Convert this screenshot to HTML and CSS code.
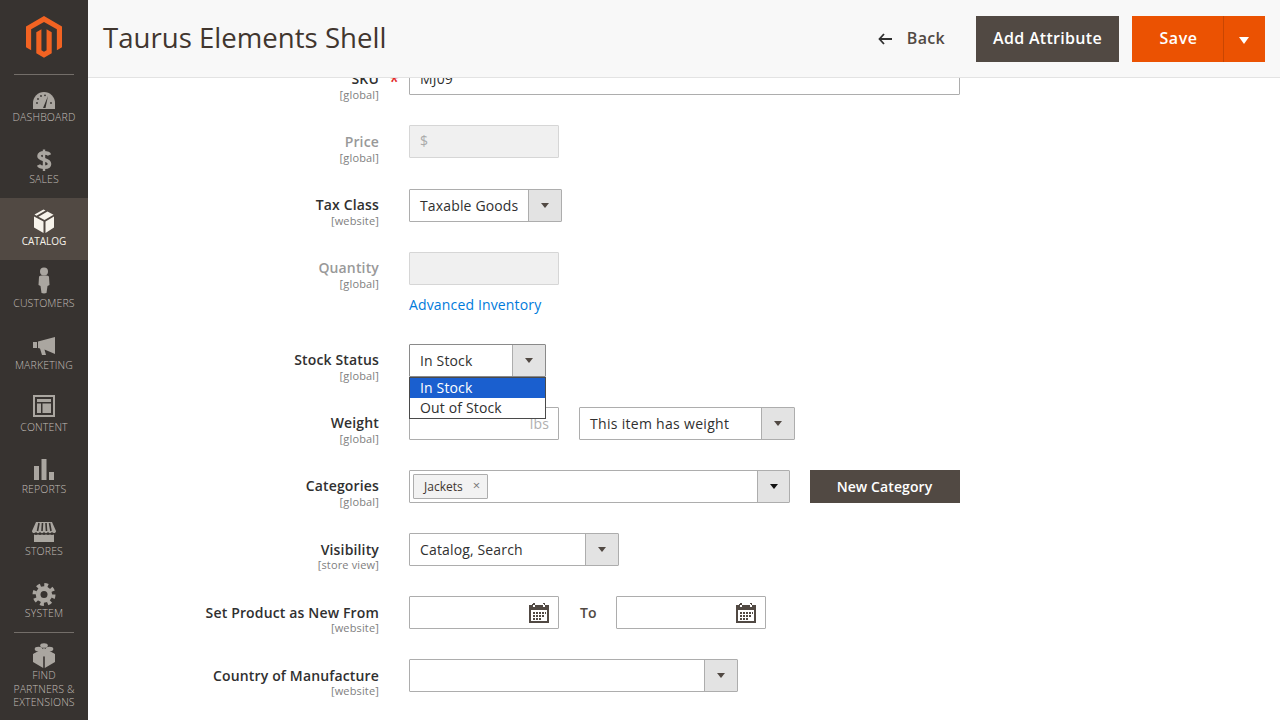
FILE: index.html
```html
<!DOCTYPE html>
<html lang="en">
<head>
<meta charset="utf-8">
<title>Taurus Elements Shell</title>
<link rel="stylesheet" href="styles.css">
</head>
<body>
<div class="app">
  <nav class="sidebar">
    <div class="logo">
      <svg width="36" height="42" viewBox="0 0 36 42"><path class="logo-mark" d="M18 0 36 10.400V31.200L30.860 34.170V13.370L18 5.940 5.140 13.370V34.170L0 31.200V10.400Z"/><path class="logo-mark" d="M10.290 16.370 15.430 13.370V34.170L18 35.650 20.570 34.170V13.370L25.710 16.370V37.160L18 41.650 10.290 37.160Z"/></svg>
    </div>
    <a class="nav-item nav-item-first">
      <svg class="nav-icon" viewBox="0 0 32 30"><path d="M5 29V23A11 11 0 0 1 27 23V29Z"/><path class="cut" d="M15 28 20 16 17.500 28Z"/><g class="ticks"><circle cx="9" cy="23" r=".9"/><circle cx="10" cy="19" r=".9"/><circle cx="13" cy="16" r=".9"/><circle cx="17" cy="15.300" r=".9"/><circle cx="23" cy="23" r=".9"/></g></svg>
      <span class="nav-label">Dashboard</span>
    </a>
    <a class="nav-item">
      <svg class="nav-icon" viewBox="0 0 32 30"><path class="dollar-line" d="M21.500 13C20.500 10.500 11 9.500 11 14 11 18.500 21.500 16.500 21.500 22 21.500 26.500 12 25.800 10.500 23"/><path class="dollar-bar" d="M16 7.500V29"/></svg>
      <span class="nav-label">Sales</span>
    </a>
    <a class="nav-item nav-item-active">
      <svg class="nav-icon" viewBox="0 0 32 30"><path d="M15.500 17.500 6 12.500V23.500L15.500 29ZM17.500 17.500V29L26 23.500V12.500Z"/><path d="M6.500 10.500 15.500 5.500 17.500 6.500 8.500 11.700ZM10.500 12.800 19.500 7.600 25.500 10.800 16.500 16Z"/></svg>
      <span class="nav-label">Catalog</span>
    </a>
    <a class="nav-item">
      <svg class="nav-icon" viewBox="0 0 32 30"><circle cx="16" cy="5.500" r="4"/><path d="M11 11C11 9.800 12.500 9.500 16 9.500S21 9.800 21 11L21.500 19 19.500 20 18.500 27 16 27.500 13.500 27 12.500 20 10.500 19Z"/></svg>
      <span class="nav-label">Customers</span>
    </a>
    <a class="nav-item">
      <svg class="nav-icon" viewBox="0 0 32 30"><path d="M5 14H9V20H5ZM10 13.500 27 9V26L16.500 21.500 18 27H14L12 20.500 10 20Z"/></svg>
      <span class="nav-label">Marketing</span>
    </a>
    <a class="nav-item">
      <svg class="nav-icon" viewBox="0 0 32 30"><path fill-rule="evenodd" d="M5 5H27V27H5ZM7 7V25H25V7ZM9 9H23V12H9ZM9 13.500H13V23H9ZM14.500 13.500H23V23H14.500Z"/></svg>
      <span class="nav-label">Content</span>
    </a>
    <a class="nav-item">
      <svg class="nav-icon" viewBox="0 0 32 30"><path d="M6 14H11V28H6ZM13.500 7H18.500V28H13.500ZM21 20H26V28H21Z"/></svg>
      <span class="nav-label">Reports</span>
    </a>
    <a class="nav-item">
      <svg class="nav-icon" viewBox="0 0 32 30"><path d="M8 8H24L28 17C28 19.500 25 19.500 24 18 23 19.500 21 19.500 20 18 19 19.500 17 19.500 16 18 15 19.500 13 19.500 12 18 11 19.500 9 19.500 8 18 7 19.500 4 19.500 4 17ZM6 20.500C7 21 9 21 10 20.500 11 21 13 21 14 20.500 15 21 17 21 18 20.500 19 21 21 21 22 20.500 23 21 25 21 26 20.500V28H6Z"/><path class="cut-line" d="M11 9 9.500 17M14.500 9 14 17M18 9 18.500 17M21.500 9 23 17"/></svg>
      <span class="nav-label">Stores</span>
    </a>
    <a class="nav-item">
      <svg class="nav-icon" viewBox="0 0 32 30"><circle class="gear-teeth" cx="16" cy="18.500" r="9.500"/><circle cx="16" cy="18.500" r="8.200"/><circle class="cut" cx="16" cy="18.500" r="3.500"/></svg>
      <span class="nav-label">System</span>
    </a>
    <div class="nav-sep"></div>
    <a class="nav-item nav-item-last">
      <svg class="nav-icon" viewBox="0 0 32 30"><path d="M16 10 27 16V24L16.800 30V19.500ZM16 10 5 16V24L15.200 30V19.500Z"/><path d="M16 11 26 16 16 18.500 6 16Z"/><ellipse cx="16" cy="7.500" rx="3.800" ry="2.300"/><ellipse cx="10.500" cy="11" rx="3.800" ry="2.300"/><ellipse cx="21.500" cy="11" rx="3.800" ry="2.300"/><ellipse cx="16" cy="14" rx="3.800" ry="2.300"/></svg>
      <span class="nav-label">Find Partners &amp; Extensions</span>
    </a>
  </nav>
  <div class="main">
    <header class="page-header">
      <h1 class="page-title">Taurus Elements Shell</h1>
      <div class="actions">
        <a class="back"><svg class="back-arrow" viewBox="0 0 14 12" width="14" height="12"><path d="M6 1 1.500 6 6 11M2 6H14"/></svg><span>Back</span></a>
        <button class="btn btn-dark btn-add">Add Attribute</button>
        <div class="split">
          <button class="btn btn-save">Save</button>
          <button class="btn btn-toggle"><span class="caret caret-white"></span></button>
        </div>
      </div>
    </header>
    <form class="form">
      <div class="row">
        <div class="label label-top"><span class="label-text">SKU</span><span class="scope">[global]</span><span class="required">*</span></div>
        <div class="input w-551">MJ09</div>
      </div>
      <div class="row row-tight">
        <div class="label label-top label-disabled"><span class="label-text">Price</span><span class="scope">[global]</span></div>
        <div class="input input-disabled w-150">$</div>
      </div>
      <div class="row">
        <div class="label"><span class="label-text">Tax Class</span><span class="scope">[website]</span></div>
        <div class="select w-153"><span class="select-value">Taxable Goods</span><span class="select-btn"><span class="caret"></span></span></div>
      </div>
      <div class="row row-stack">
        <div class="label label-disabled"><span class="label-text">Quantity</span><span class="scope">[global]</span></div>
        <div class="stack">
          <div class="input input-disabled w-150"></div>
          <a class="link">Advanced Inventory</a>
        </div>
      </div>
      <div class="row">
        <div class="label"><span class="label-text">Stock Status</span><span class="scope">[global]</span></div>
        <div class="select w-137 select-open"><span class="select-value">In Stock</span><span class="select-btn"><span class="caret"></span></span>
          <ul class="popup">
            <li class="popup-item popup-item-on">In Stock</li>
            <li class="popup-item">Out of Stock</li>
          </ul>
        </div>
      </div>
      <div class="row">
        <div class="label"><span class="label-text">Weight</span><span class="scope">[global]</span></div>
        <div class="input w-150 input-unit"><span class="unit">lbs</span></div>
        <div class="select w-216"><span class="select-value select-value-wide">This item has weight</span><span class="select-btn"><span class="caret"></span></span></div>
      </div>
      <div class="row">
        <div class="label"><span class="label-text">Categories</span><span class="scope">[global]</span></div>
        <div class="select w-381"><span class="select-value select-value-tags"><span class="tag">Jackets<span class="tag-x">×</span></span></span><span class="select-btn select-btn-narrow"><span class="caret caret-black"></span></span></div>
        <button class="btn-new">New Category</button>
      </div>
      <div class="row">
        <div class="label label-mid"><span class="label-text">Visibility</span><span class="scope">[store view]</span></div>
        <div class="select w-210"><span class="select-value">Catalog, Search</span><span class="select-btn"><span class="caret"></span></span></div>
      </div>
      <div class="row">
        <div class="label label-mid"><span class="label-text">Set Product as New From</span><span class="scope">[website]</span></div>
        <div class="input w-150 input-date"><svg class="cal" viewBox="0 0 20 20" width="20" height="20"><path fill-rule="evenodd" d="M0 2H3V1H4V2H14V1H15V2H20V20H0ZM2 7V18H18V7ZM4 0H6V4H4ZM14 0H16V4H14ZM4 9H6V11H4ZM7 9H9V11H7ZM10 9H12V11H10ZM13 9H15V11H13ZM16 9H17V11H16ZM4 12H6V14H4ZM7 12H9V14H7ZM10 12H12V14H10ZM13 12H15V14H13ZM4 15H6V17H4ZM7 15H9V17H7ZM10 15H12V17H10Z"/></svg></div>
        <span class="to">To</span>
        <div class="input w-150 input-date"><svg class="cal" viewBox="0 0 20 20" width="20" height="20"><path fill-rule="evenodd" d="M0 2H3V1H4V2H14V1H15V2H20V20H0ZM2 7V18H18V7ZM4 0H6V4H4ZM14 0H16V4H14ZM4 9H6V11H4ZM7 9H9V11H7ZM10 9H12V11H10ZM13 9H15V11H13ZM16 9H17V11H16ZM4 12H6V14H4ZM7 12H9V14H7ZM10 12H12V14H10ZM13 12H15V14H13ZM4 15H6V17H4ZM7 15H9V17H7ZM10 15H12V17H10Z"/></svg></div>
      </div>
      <div class="row">
        <div class="label label-mid"><span class="label-text">Country of Manufacture</span><span class="scope">[website]</span></div>
        <div class="select w-329"><span class="select-value"></span><span class="select-btn"><span class="caret"></span></span></div>
      </div>
    </form>
  </div>
</div>
</body>
</html>
```
FILE: styles.css
```css
* { box-sizing: border-box; }
html, body { margin: 0; height: 720px; overflow: hidden; background: #fff; }
body { font-family: "Open Sans", sans-serif; color: #303030; font-size: 14px; letter-spacing: .15px; }
.app { display: flex; height: 720px; }

.sidebar { width: 88px; flex: none; background: #373330; display: flex; flex-direction: column; }
.logo { height: 75px; margin: 0 14px; padding-top: 16px; border-bottom: 1px solid #736e69; display: flex; justify-content: center; align-items: flex-start; }
.logo-mark { fill: #f26322; }
.nav-item { height: 62px; padding-top: 6px; display: block; text-align: center; color: #c2beb8; fill: #aaa6a0; }
.nav-item-first { height: 61px; padding-top: 5px; }
.nav-item-active { background: #514943; color: #f7f3eb; fill: #f7f3eb; }
.nav-icon { display: block; width: 32px; height: 30px; margin: 0 auto; overflow: visible; }
.nav-label { display: block; font-size: 10.500px; font-weight: 300; line-height: 14px; text-transform: uppercase; letter-spacing: .15px; }
.nav-item-active .nav-label { font-weight: 400; letter-spacing: 0; font-size: 10px; }
.nav-sep { height: 1px; flex: none; margin: 0 14px; background: #736e69; }
.nav-item-last { height: 87px; padding-top: 5px; }
.nav-item-last .nav-label { line-height: 13.500px; padding: 1px 8px 0; }
.cut { fill: #373330; }
.ticks { fill: #373330; }
.cut-line { fill: none; stroke: #373330; stroke-width: 1.600; }
.dollar-line { fill: none; stroke: #aaa6a0; stroke-width: 3.600; }
.dollar-bar { fill: none; stroke: #aaa6a0; stroke-width: 2.400; }
.gear-teeth { fill: none; stroke: #aaa6a0; stroke-width: 4; stroke-dasharray: 3.700 3.760; }

.main { flex: 1; position: relative; overflow: hidden; }
.page-header { position: absolute; top: 0; left: 0; right: 0; z-index: 2; height: 78px; background: #f8f8f8; border-bottom: 1px solid #e3e3e3; display: flex; align-items: center; justify-content: space-between; padding: 0 15px; }
.page-title { margin: 0 0 4px; font-size: 27.600px; font-weight: 400; letter-spacing: 0; color: #41362f; line-height: 36px; }
.actions { display: flex; align-items: center; }
.back { display: flex; align-items: center; margin-right: 31px; padding-bottom: 1px; font-size: 16px; font-weight: 600; color: #514943; letter-spacing: .3px; }
.back-arrow { margin-right: 15px; margin-top: 1px; fill: none; stroke: #303030; stroke-width: 1.800; }
.btn { border: 0; height: 46px; font-family: inherit; font-size: 16px; font-weight: 600; letter-spacing: .3px; color: #fff; padding: 0 0 2px; display: flex; align-items: center; justify-content: center; }
.btn-dark { background: #514943; }
.btn-add { width: 143px; margin-right: 13px; }
.split { display: flex; }
.btn-save { width: 91px; background: #eb5202; letter-spacing: .6px; padding-left: 2px; }
.btn-toggle { width: 42px; background: #eb5202; border-left: 1px solid #c94602; padding: 0 2px 0 0; }

.form { padding-top: 62px; }
.row { display: flex; align-items: flex-start; height: 33px; margin-bottom: 30px; }
.row-tight { margin-bottom: 31px; }
.row-stack { height: 63px; margin-bottom: 29px; }
.label { position: relative; width: 291px; margin-right: 30px; flex: none; padding-top: 7px; text-align: right; }
.label-top { padding-top: 8px; }
.label-mid { padding-top: 8px; }
.label-mid .label-text { line-height: 17px; }
.label-text { display: block; font-weight: 600; line-height: 18px; color: #303030; }
.scope { display: block; font-size: 11px; line-height: 14px; color: #808080; }
.label-disabled .label-text { color: #999; }
.required { position: absolute; left: 301px; top: 10px; color: #e22626; font-size: 19px; line-height: 18px; }
.stack { display: flex; flex-direction: column; align-items: flex-start; }
.link { margin-top: 10px; line-height: 20px; color: #007bdb; }

.input { height: 33px; border: 1px solid #adadad; border-radius: 1px; background: #fff; padding: 0 10px; line-height: 31px; color: #303030; flex: none; }
.input-disabled { background: #f0f0f0; border-color: #d6d6d6; color: #aaa; line-height: 29px; }
.input-unit { text-align: right; margin-right: 20px; padding-right: 9px; }
.unit { color: #b0b0b0; }
.input-date { display: flex; align-items: center; justify-content: flex-end; padding: 0 9px 0 0; }
.cal { fill: #514943; display: block; }
.to { width: 57px; flex: none; padding-left: 21px; line-height: 33px; font-weight: 600; color: #514943; letter-spacing: 0; }
.w-150 { width: 150px; }
.w-551 { width: 551px; }
.w-153 { width: 153px; }
.w-137 { width: 137px; }
.w-216 { width: 216px; }
.w-381 { width: 381px; margin-right: 20px; }
.w-210 { width: 210px; }
.w-329 { width: 329px; }

.select { position: relative; height: 33px; display: flex; flex: none; border: 1px solid #adadad; border-radius: 1px; background: #fff; }
.select-value { flex: 1; padding-left: 10px; line-height: 31px; white-space: nowrap; color: #303030; }
.select-value-wide { letter-spacing: .3px; }
.select-value-tags { padding: 3px; display: flex; align-items: flex-start; }
.select-btn { width: 33px; flex: none; background: #e3e3e3; border-left: 1px solid #adadad; display: flex; align-items: center; justify-content: center; }
.select-btn-narrow { width: 32px; }
.caret { width: 0; height: 0; border-left: 4.500px solid transparent; border-right: 4.500px solid transparent; border-top: 5px solid #514943; display: block; }
.caret-black { border-top-color: #111; }
.caret-white { border-left-width: 5.500px; border-right-width: 5.500px; border-top: 7px solid #fff; margin-top: 3px; }
.select-open { border-color: #8a8a8a; }
.popup { position: absolute; left: -1px; top: 32px; z-index: 1; width: 137px; margin: 0; padding: 0; list-style: none; background: #fff; border: 1px solid #4a4a4a; }
.popup-item { height: 20px; line-height: 20px; padding-left: 10px; color: #303030; }
.popup-item-on { background: #1a5fcf; color: #fff; }
.tag { display: flex; align-items: center; height: 25px; border: 1px solid #adadad; background: #f2f2f2; border-radius: 1px; font-size: 12px; letter-spacing: 0; line-height: 23px; padding: 0 7px 0 10px; color: #41362f; }
.tag-x { margin-left: 10px; color: #777; font-size: 13px; position: relative; top: -1px; }
.btn-new { width: 150px; height: 33px; border: 0; background: #514943; color: #fff; font-family: inherit; font-size: 14px; font-weight: 600; letter-spacing: .1px; padding: 0 1px 0 0; flex: none; }
```
